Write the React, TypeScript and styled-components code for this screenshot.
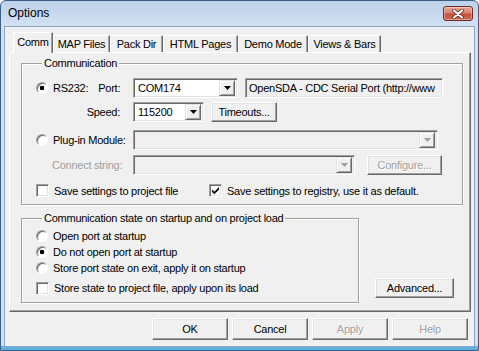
import React from "react";
import styled, { createGlobalStyle } from "styled-components";

const GlobalStyle = createGlobalStyle`
  html, body {
    margin: 0;
    padding: 0;
    background: #ffffff;
  }
  body {
    font-family: "Liberation Sans", Arial, sans-serif;
    font-size: 11px;
    letter-spacing: -0.25px;
    color: #000;
  }
`;

const Window = styled.div`
  width: 479px;
  height: 351px;
  box-sizing: border-box;
  border: 1px solid #3b5f86;
  border-radius: 6px 6px 0 0;
  padding: 0 3px 3px 3px;
  display: flex;
  flex-direction: column;
  background: linear-gradient(
    to bottom,
    #bcd1e9 0px,
    #d2e1f2 25px,
    #d2e1f2 calc(100% - 5px),
    #5cb2de calc(100% - 3px)
  );
`;

const TitleBar = styled.div`
  height: 25px;
  display: flex;
  justify-content: space-between;
  align-items: flex-start;
  padding-left: 4px;
`;

const Title = styled.div`
  font-family: "Liberation Sans", Arial, sans-serif;
  font-size: 12px;
  letter-spacing: 0;
  line-height: 25px;
  color: #000;
`;

const CloseButton = styled.div`
  width: 30px;
  height: 15px;
  margin: 5px 2px 0 0;
  box-sizing: border-box;
  border: 1px solid #6f2a22;
  border-radius: 3px;
  background: linear-gradient(to bottom, #e9a99b 0%, #d8806f 45%, #c4503d 55%, #d36e58 100%);
  box-shadow: inset 0 0 0 1px rgba(255, 255, 255, 0.35);
  display: flex;
  align-items: center;
  justify-content: center;
`;

const Client = styled.div`
  flex: 1;
  background: #f0f0f0;
  border: 1px solid #8da6c1;
  display: flex;
  flex-direction: column;
`;

const TabStrip = styled.div`
  height: 20px;
  margin: 5px 0 0 8px;
  display: flex;
  align-items: flex-end;
  position: relative;
  z-index: 1;
`;

const Tab = styled.div<{ $active?: boolean; $width: number }>`
  box-sizing: border-box;
  width: ${p => p.$width}px;
  height: ${p => (p.$active ? 21 : 17)}px;
  margin-bottom: ${p => (p.$active ? -1 : 0)}px;
  padding-bottom: ${p => (p.$active ? 2 : 0)}px;
  display: flex;
  align-items: center;
  justify-content: center;
  background: #f0f0f0;
  border-top: 1px solid #ffffff;
  border-left: 1px solid #ffffff;
  border-right: 1px solid #696969;
  box-shadow: inset -1px 0 #a0a0a0;
  white-space: nowrap;
`;

const TabPanel = styled.div`
  height: 260px;
  margin: 0 3px 0 4px;
  box-sizing: border-box;
  border: 1px solid;
  border-color: #ffffff #696969 #696969 #ffffff;
  box-shadow: inset -1px -1px #a0a0a0;
  padding: 4px 0 0 11px;
  display: flex;
  flex-direction: column;
`;

const Group = styled.fieldset<{ $width: number; $top: number }>`
  width: ${p => p.$width}px;
  box-sizing: border-box;
  margin: ${p => p.$top}px 0 0 0;
  padding: 0 0 ${p => (p.$width > 400 ? 7 : 6)}px 14px;
  border: 1px solid #a0a0a0;
  box-shadow: 1px 1px 0 #ffffff, inset 1px 1px 0 #ffffff;
  min-inline-size: 0;
`;

const Legend = styled.legend`
  margin-left: 6px;
  padding: 0 2px;
  line-height: 13px;
  background: #f0f0f0;
`;

const Row = styled.div<{ $top: number; $h?: number }>`
  display: flex;
  align-items: center;
  height: ${p => p.$h ?? 20}px;
  margin-top: ${p => p.$top}px;
`;

const LabelCell = styled.div<{ $right?: boolean; $width?: number }>`
  width: ${p => p.$width ?? 97}px;
  flex-shrink: 0;
  display: flex;
  align-items: center;
  justify-content: ${p => (p.$right ? "flex-end" : "flex-start")};
  padding-right: ${p => (p.$right ? 13 : 0)}px;
  box-sizing: border-box;
  white-space: nowrap;
`;

const Text = styled.span<{ $disabled?: boolean; $indent?: number }>`
  color: ${p => (p.$disabled ? "#a0a0a0" : "#000")};
  margin-left: ${p => p.$indent ?? 0}px;
  white-space: nowrap;
`;

const RadioBox = styled.span<{ $checked?: boolean }>`
  width: 12px;
  height: 12px;
  flex-shrink: 0;
  box-sizing: border-box;
  border-radius: 50%;
  border: 1px solid;
  border-color: #a0a0a0 #ffffff #ffffff #a0a0a0;
  box-shadow: inset 1px 1px 0 #696969;
  background: ${p =>
    p.$checked
      ? "radial-gradient(circle at 50% 50%, #000 0 2px, #ffffff 2.6px)"
      : "#ffffff"};
  margin-right: 5px;
`;

const CheckBox = styled.span`
  width: 13px;
  height: 13px;
  flex-shrink: 0;
  box-sizing: border-box;
  border: 1px solid;
  border-color: #a0a0a0 #ffffff #ffffff #a0a0a0;
  box-shadow: inset 1px 1px 0 #696969, inset -1px -1px 0 #e3e3e3;
  background: #ffffff;
  margin-right: 5px;
  display: flex;
  align-items: center;
  justify-content: center;
`;

const Combo = styled.div<{ $width: number; $disabled?: boolean }>`
  width: ${p => p.$width}px;
  height: 20px;
  flex-shrink: 0;
  box-sizing: border-box;
  border: 1px solid;
  border-color: #a0a0a0 #ffffff #ffffff #a0a0a0;
  box-shadow: inset 1px 1px 0 #696969, inset -1px -1px 0 #e3e3e3;
  background: ${p => (p.$disabled ? "#f0f0f0" : "#ffffff")};
  display: flex;
  align-items: center;
  padding: 2px 2px 2px 4px;
  white-space: nowrap;
  overflow: hidden;
`;

const ComboValue = styled.span`
  flex: 1;
  overflow: hidden;
`;

const DropButton = styled.span`
  width: 16px;
  height: 16px;
  box-sizing: border-box;
  flex-shrink: 0;
  background: #f0f0f0;
  border: 1px solid;
  border-color: #e3e3e3 #696969 #696969 #e3e3e3;
  box-shadow: inset 1px 1px 0 #ffffff, inset -1px -1px 0 #a0a0a0;
  display: flex;
  align-items: center;
  justify-content: center;
`;

const InfoBox = styled(Combo)`
  margin-left: 7px;
  padding-left: 3px;
`;

const Button = styled.div<{ $width: number; $height?: number; $disabled?: boolean; $gap?: number }>`
  width: ${p => p.$width}px;
  height: ${p => p.$height ?? 20}px;
  margin-left: ${p => p.$gap ?? 0}px;
  flex-shrink: 0;
  box-sizing: border-box;
  border: 1px solid;
  border-color: #ffffff #696969 #696969 #ffffff;
  box-shadow: inset -1px -1px 0 #a0a0a0, inset 1px 1px 0 #e3e3e3;
  background: #f0f0f0;
  display: flex;
  align-items: center;
  justify-content: center;
  color: ${p => (p.$disabled ? "#a0a0a0" : "#000")};
  text-shadow: ${p => (p.$disabled ? "1px 1px 0 #ffffff" : "none")};
  white-space: nowrap;
`;

const LowerArea = styled.div`
  display: flex;
  align-items: flex-end;
`;

const AdvancedSlot = styled.div`
  margin: 0 0 5px 16px;
`;

const ButtonBar = styled.div`
  display: flex;
  justify-content: flex-end;
  margin: 6px 6px 0 0;
`;

const Arrow = ({ color = "#000" }: { color?: string }) => (
  <svg width="7" height="4" viewBox="0 0 7 4">
    <polygon points="0,0 7,0 3.5,4" fill={color} />
  </svg>
);

const Check = () => (
  <svg width="9" height="9" viewBox="0 0 9 9">
    <polygon points="1,3.5 3.3,5.8 8,1.1 8,3.6 3.3,8.3 1,6" fill="#000" />
  </svg>
);

const CloseGlyph = () => (
  <svg width="12" height="10" viewBox="0 0 12 10">
    <path d="M2 1.5 L10 8.5 M10 1.5 L2 8.5" stroke="#5a1d15" strokeWidth="3.6" strokeLinecap="round" />
    <path d="M2 1.5 L10 8.5 M10 1.5 L2 8.5" stroke="#ffffff" strokeWidth="2.2" strokeLinecap="round" />
  </svg>
);

function Radio({ checked, label }: { checked?: boolean; label: string }) {
  return (
    <>
      <RadioBox $checked={checked} />
      <Text>{label}</Text>
    </>
  );
}

function Checked({ checked, label }: { checked?: boolean; label: string }) {
  return (
    <>
      <CheckBox>{checked && <Check />}</CheckBox>
      <Text>{label}</Text>
    </>
  );
}

function DropDown({ width, value, disabled }: { width: number; value?: string; disabled?: boolean }) {
  return (
    <Combo $width={width} $disabled={disabled}>
      <ComboValue>{value}</ComboValue>
      <DropButton>
        <Arrow color={disabled ? "#a0a0a0" : "#000"} />
      </DropButton>
    </Combo>
  );
}

const tabs: [string, number][] = [
  ["Comm", 40],
  ["MAP Files", 57],
  ["Pack Dir", 53],
  ["HTML Pages", 75],
  ["Demo Mode", 70],
  ["Views & Bars", 73],
];

export default function App() {
  return (
    <>
      <GlobalStyle />
      <Window>
        <TitleBar>
          <Title>Options</Title>
          <CloseButton>
            <CloseGlyph />
          </CloseButton>
        </TitleBar>
        <Client>
          <TabStrip>
            {tabs.map(([t, w], i) => (
              <Tab key={t} $active={i === 0} $width={w}>
                {t}
              </Tab>
            ))}
          </TabStrip>
          <TabPanel>
            <Group $width={442} $top={0}>
              <Legend>Communication</Legend>
              <Row $top={8}>
                <LabelCell>
                  <Radio checked label="RS232:" />
                  <Text $indent={10}>Port:</Text>
                </LabelCell>
                <DropDown width={105} value="COM174" />
                <InfoBox $width={198} $disabled>
                  OpenSDA - CDC Serial Port (http://www
                </InfoBox>
              </Row>
              <Row $top={4}>
                <LabelCell $right>
                  <Text>Speed:</Text>
                </LabelCell>
                <DropDown width={71} value="115200" />
                <Button $width={66} $gap={7}>
                  Timeouts...
                </Button>
              </Row>
              <Row $top={8}>
                <LabelCell>
                  <Radio label="Plug-in Module:" />
                </LabelCell>
                <DropDown width={305} disabled />
              </Row>
              <Row $top={5}>
                <LabelCell>
                  <Text $disabled $indent={16}>
                    Connect string:
                  </Text>
                </LabelCell>
                <DropDown width={222} disabled />
                <Button $width={75} $gap={12} $disabled>
                  Configure...
                </Button>
              </Row>
              <Row $top={9} $h={13}>
                <LabelCell $width={173}>
                  <Checked label="Save settings to project file" />
                </LabelCell>
                <Checked checked label="Save settings to registry, use it as default." />
              </Row>
            </Group>
            <LowerArea>
              <Group $width={338} $top={7}>
                <Legend>Communication state on startup and on project load</Legend>
                <Row $top={3} $h={16}>
                  <Radio label="Open port at startup" />
                </Row>
                <Row $top={0} $h={16}>
                  <Radio checked label="Do not open port at startup" />
                </Row>
                <Row $top={0} $h={16}>
                  <Radio label="Store port state on exit, apply it on startup" />
                </Row>
                <Row $top={4} $h={16}>
                  <Checked label="Store state to project file, apply upon its load" />
                </Row>
              </Group>
              <AdvancedSlot>
                <Button $width={79}>Advanced...</Button>
              </AdvancedSlot>
            </LowerArea>
          </TabPanel>
          <ButtonBar>
            <Button $width={76} $height={22}>
              OK
            </Button>
            <Button $width={76} $height={22} $gap={4}>
              Cancel
            </Button>
            <Button $width={76} $height={22} $gap={4} $disabled>
              Apply
            </Button>
            <Button $width={76} $height={22} $gap={4} $disabled>
              Help
            </Button>
          </ButtonBar>
        </Client>
      </Window>
    </>
  );
}
